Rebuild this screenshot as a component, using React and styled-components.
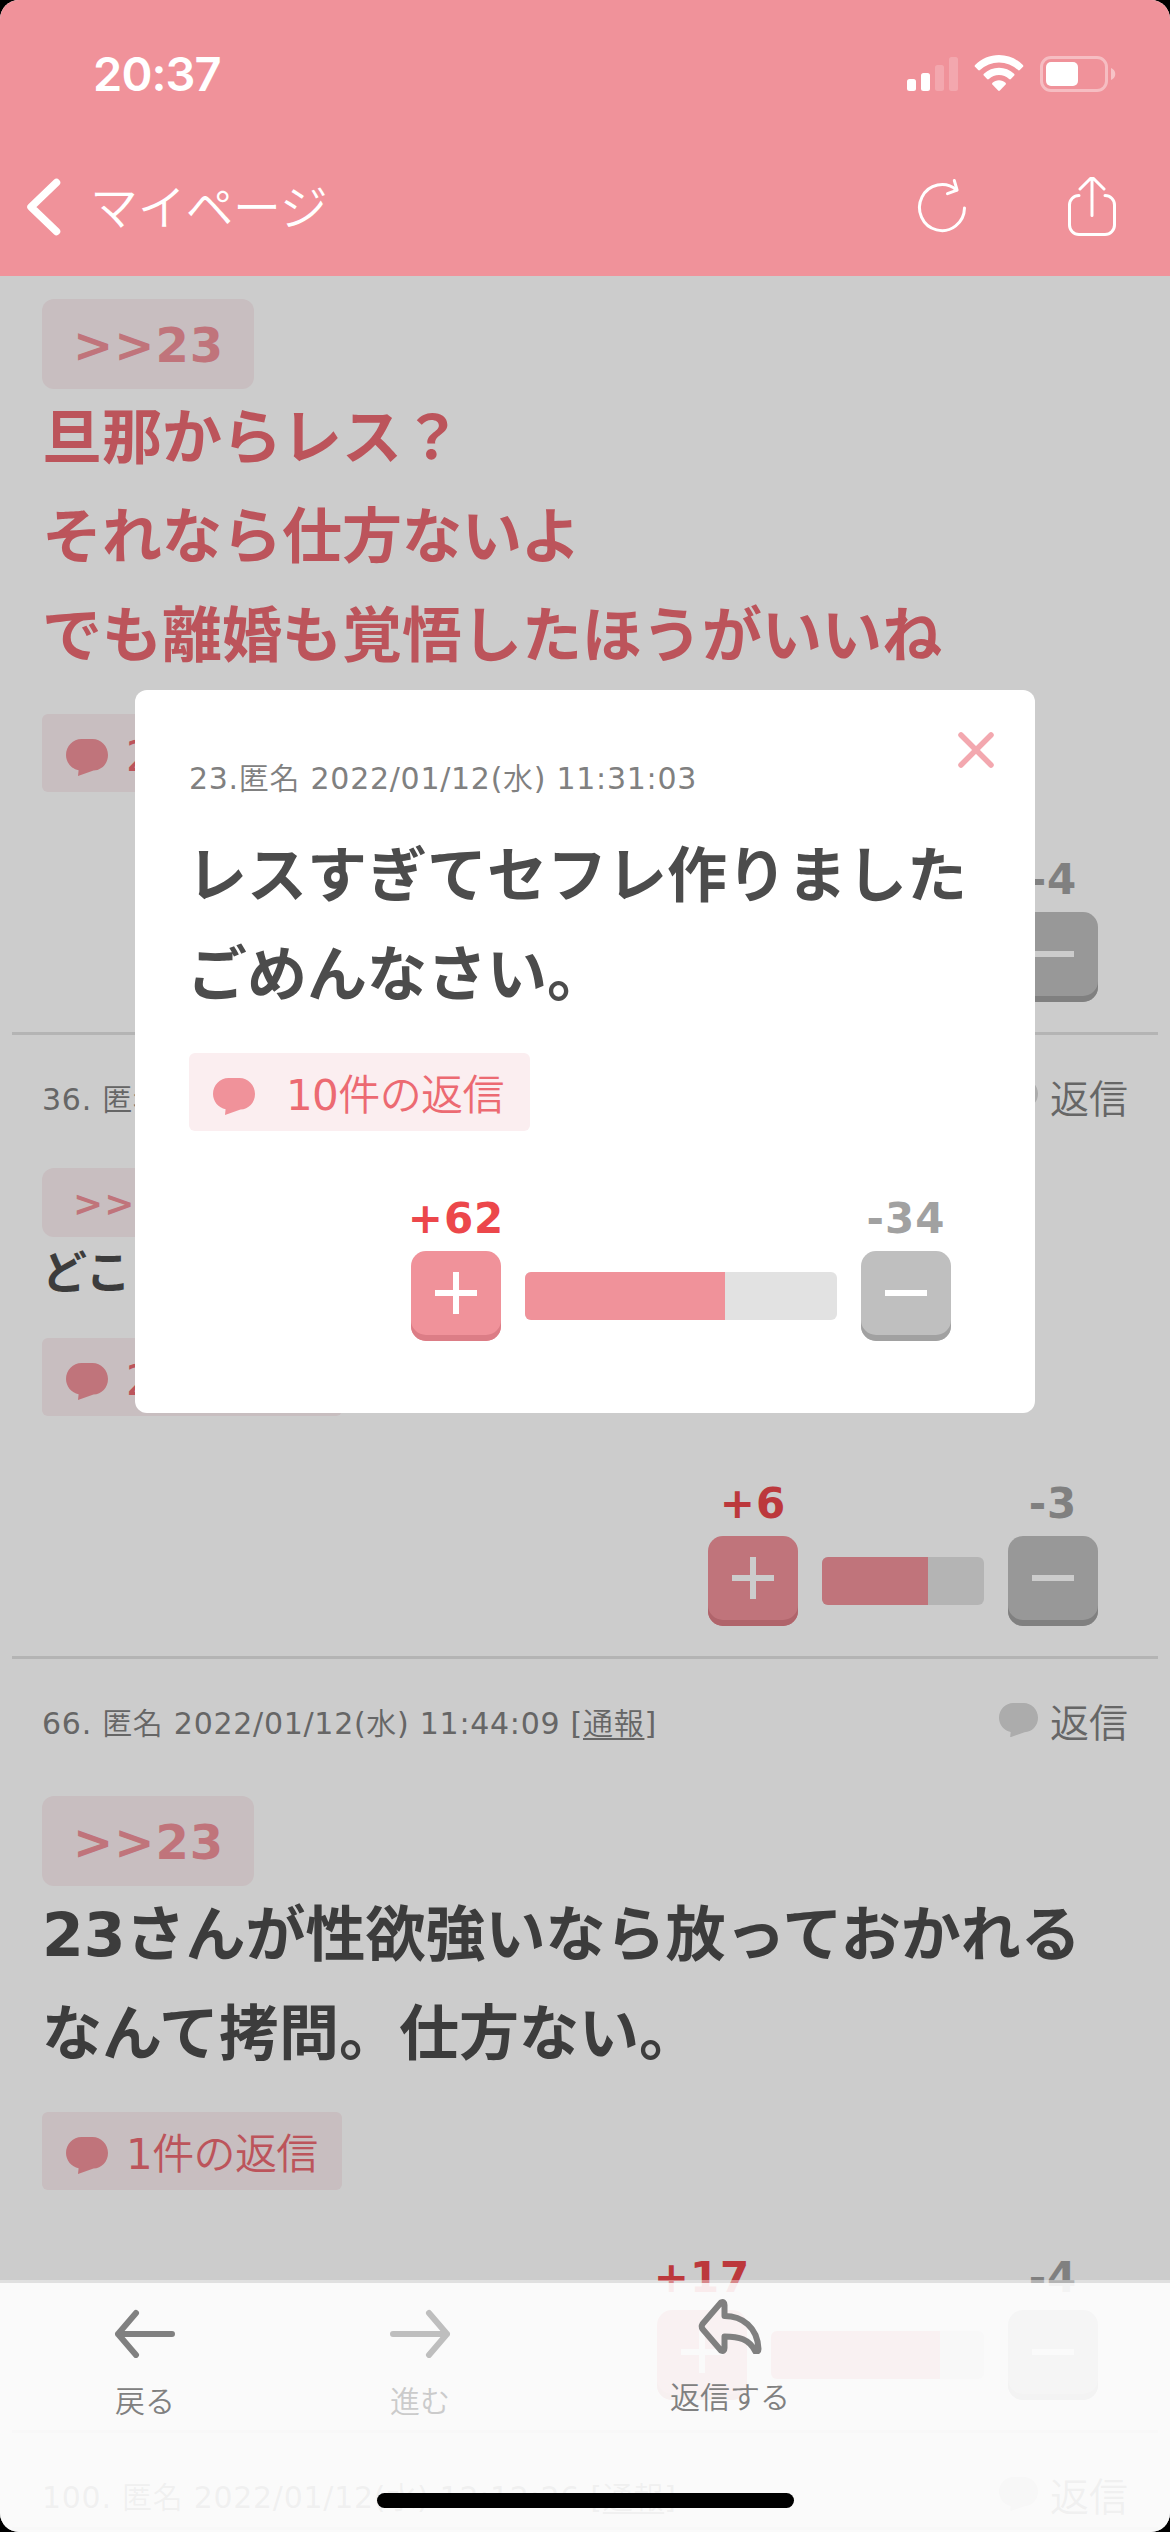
import React from "react";
import styled, { createGlobalStyle } from "styled-components";

const sans = `"DejaVu Sans", "Noto Sans CJK JP", sans-serif`;
const sansLight = `"DejaVu Sans", "Noto Sans CJK JP DemiLight", "Noto Sans CJK JP", sans-serif`;
const kana = `"Noto Sans CJK JP DemiLight", "Noto Sans CJK JP", sans-serif`;

const GlobalStyle = createGlobalStyle`
  * { box-sizing: border-box; }
  body { margin: 0; background: #000; }
  svg { display: block; flex: none; }
`;

const Screen = styled.div`
  position: relative;
  display: flex;
  flex-direction: column;
  width: 1170px;
  height: 2532px;
  overflow: hidden;
  border-radius: 19px;
  background: #fff;
  font-family: ${sans};
`;

const Header = styled.header`
  flex: none;
  height: 276px;
  background: #f0929a;
  color: #fff;
`;

const StatusBar = styled.div`
  display: flex;
  align-items: center;
  justify-content: space-between;
  height: 148px;
  padding: 0 54px 0 93px;
`;

const Clock = styled.span`
  font: 600 47px/56px Inter, sans-serif;
  letter-spacing: -0.9px;
`;

const NavBar = styled.nav`
  display: flex;
  align-items: center;
  height: 118px;
  padding: 0 51px 0 24px;
`;

const NavTitle = styled.span`
  flex: 1;
  margin-left: 26px;
  padding-bottom: 6px;
  font: 300 48px/60px ${kana};
  letter-spacing: -0.3px;
`;

const ShareWrap = styled.span`
  margin-left: 96px;
`;

const Main = styled.main`
  position: relative;
  flex: 1;
  min-height: 0;
  overflow: hidden;
`;

const Post = styled.article`
  padding: 0 30px ${(p) => (p.$last ? 0 : 30)}px;
  margin: 0 12px;
  border-bottom: 3px solid #e2e2e2;
`;

const PostHead = styled.div`
  display: flex;
  align-items: center;
  height: 60px;
  margin-top: 34px;
`;

const Meta = styled.span`
  flex: 1;
  font-family: ${sansLight};
  font-size: 30px;
  line-height: 45px;
  letter-spacing: 0.72px;
  white-space: nowrap;
  color: #808080;
`;

const Report = styled.a`
  text-decoration: underline;
  text-decoration-thickness: 2px;
  text-underline-offset: 4px;
`;

const ReplyLink = styled.span`
  display: flex;
  align-items: center;
  gap: 12px;
  font: 300 39px/58px ${kana};
  color: #808080;
`;

const ReplyLabel = styled.span`
  padding-bottom: 6px;
`;

const RefRow = styled.div`
  display: flex;
  padding-top: ${(p) => p.$top}px;
`;

const Ref = styled.a`
  height: ${(p) => (p.$small ? 69 : 90)}px;
  padding: 0 30px 0 31px;
  border-radius: 12px;
  background: #fbeef0;
  color: #f0929a;
  font-weight: 700;
  font-size: ${(p) => (p.$small ? 36 : 48)}px;
  line-height: ${(p) => (p.$small ? 71 : 92)}px;
  letter-spacing: 1px;
`;

const Body = styled.p`
  margin: 0;
  font-weight: 700;
  font-size: ${(p) => (p.$small ? 45 : 60)}px;
  line-height: ${(p) => (p.$small ? 74 : 99)}px;
  color: ${(p) => (p.$pink ? "#ec6a72" : "#4c4c4c")};
  white-space: pre;
`;

const Replies = styled.a`
  display: flex;
  align-items: center;
  width: fit-content;
  height: 78px;
  margin-top: ${(p) => p.$top || 28}px;
  padding: 0 ${(p) => (p.$wide ? 26 : 24)}px 0 24px;
  gap: ${(p) => (p.$wide ? 31 : 18)}px;
  border-radius: 6px;
  background: #fbeef0;
  color: #ec6a72;
  font-family: ${sansLight};
  font-size: 42px;
  line-height: 60px;
  letter-spacing: -0.6px;
`;

const BubbleSlot = styled.span`
  padding-top: 8px;
`;

const RepliesLabel = styled.span`
  padding-top: 8px;
`;

const Votes = styled.div`
  display: flex;
  align-items: flex-end;
  justify-content: flex-end;
  gap: 24px;
  padding: 63px 30px 0 0;
`;

const VoteColumn = styled.div`
  display: flex;
  flex-direction: column;
  align-items: center;
  width: 90px;
`;

const Count = styled.span`
  padding-top: 1px;
  margin-bottom: 8px;
  font-weight: 700;
  font-size: 42px;
  line-height: 48px;
  letter-spacing: 1px;
  white-space: nowrap;
  color: ${(p) => (p.$plus ? "#ec474b" : "#a1a1a1")};
`;

const VoteButton = styled.button`
  display: flex;
  justify-content: center;
  width: 90px;
  height: 90px;
  padding: 21px 0 0;
  border: 0;
  border-radius: 15px;
  background: ${(p) => (p.$plus ? "#f0929a" : "#bfbfbf")};
  box-shadow: inset 0 -6px 0 ${(p) => (p.$plus ? "#dc7d86" : "#a1a1a1")};
`;

const Meter = styled.div`
  width: ${(p) => p.$width}px;
  height: 48px;
  margin-bottom: 21px;
  overflow: hidden;
  border-radius: 6px;
  background: #e2e2e2;
`;

const MeterFill = styled.div`
  width: ${(p) => p.$width}px;
  height: 100%;
  background: #f0929a;
`;

const Backdrop = styled.div`
  position: absolute;
  inset: 0;
  background: rgba(0, 0, 0, 0.2);
`;

const Modal = styled.section`
  position: absolute;
  top: 414px;
  left: 135px;
  width: 900px;
  height: 723px;
  padding: 66px 54px 0;
  border-radius: 12px;
  background: #fff;
`;

const ModalMeta = styled(Meta)`
  display: block;
  margin-bottom: 26px;
`;

const ModalBody = styled(Body)`
  margin-left: -2px;
`;

const Close = styled.button`
  position: absolute;
  top: 41px;
  right: 40px;
  padding: 0;
  border: 0;
  background: none;
`;

const Toolbar = styled.footer`
  position: absolute;
  left: 0;
  right: 0;
  bottom: 0;
  height: 252px;
  border-top: 3px solid rgba(255, 255, 255, 0.4);
  background: rgba(255, 255, 255, 0.9);
  background-clip: padding-box;
`;

const Tools = styled.div`
  display: flex;
  padding-left: 55px;
`;

const Tool = styled.button`
  display: flex;
  flex-direction: column;
  align-items: center;
  width: ${(p) => p.$width}px;
  padding: ${(p) => p.$top}px 0 0;
  border: 0;
  background: none;
  gap: 19px;
  color: ${(p) => (p.$off ? "#cbcbcb" : "#808080")};
  font: 300 30px/44px ${kana};
`;

const HomeIndicator = styled.div`
  position: absolute;
  left: 377px;
  bottom: 24px;
  width: 417px;
  height: 15px;
  border-radius: 8px;
  background: #000;
`;

function StatusIcons() {
  return (
    <svg width="210" height="40" viewBox="906 54 210 40" fill="#fff">
      <rect x="907" y="79" width="9" height="12" rx="2.5" />
      <rect x="921" y="73" width="9" height="18" rx="2.5" />
      <rect x="935" y="65" width="9" height="26" rx="2.5" opacity=".2" />
      <rect x="949" y="57" width="9" height="34" rx="2.5" opacity=".2" />
      <path d="M999 55c9 0 17.500 3.600 23.900 9.900.6.6.6 1.300.1 1.900l-3.200 3.300c-.5.5-1.200.5-1.800 0a27.500 27.500 0 0 0-38 0c-.6.5-1.300.5-1.800 0l-3.200-3.300c-.5-.6-.5-1.300.1-1.900C981.500 58.600 990 55 999 55z" />
      <path d="M999 67.800c5.700 0 11 2.200 15.100 6 .6.5.6 1.300.1 1.800l-3.300 3.400c-.5.5-1.200.5-1.800 0a15 15 0 0 0-20.200 0c-.6.5-1.300.5-1.800 0l-3.300-3.400c-.5-.5-.5-1.300.1-1.800 4.100-3.800 9.400-6 15.100-6z" />
      <path d="M999 80.300c2.500 0 4.800.9 6.500 2.500.6.6.6 1.200.1 1.800l-5.700 6c-.5.5-1.300.5-1.800 0l-5.700-6c-.5-.6-.5-1.200.1-1.800 1.700-1.600 4-2.500 6.500-2.500z" />
      <rect x="1041.500" y="57.500" width="65" height="33" rx="9.500" fill="none" stroke="#fff" strokeWidth="3" opacity=".4" />
      <rect x="1046" y="62" width="32" height="24" rx="5" />
      <path d="M1111 68c2.500 1 4.300 3.300 4.300 6s-1.800 5-4.300 6z" opacity=".45" />
    </svg>
  );
}

function Bubble({ width = 42, color = "#f0929a" }) {
  return (
    <svg width={width} height={(width * 37) / 42} viewBox="0 0 42 37" fill={color}>
      <path d="M15.500 0h11C35 0 42 7.200 42 16S35.500 31.300 27.500 31.600L12 37l.6-5.800C5.500 30 0 23.500 0 16 0 7.200 7 0 15.500 0z" />
    </svg>
  );
}

function VoteGlyph({ plus }) {
  return (
    <svg width="42" height="42" viewBox="0 0 42 42" fill="#fff">
      <rect y="18" width="42" height="6" />
      {plus && <rect x="18" width="6" height="42" />}
    </svg>
  );
}

function VoteRow({ plus, minus, meter, fill }) {
  return (
    <Votes>
      <VoteColumn>
        <Count $plus>+{plus}</Count>
        <VoteButton $plus>
          <VoteGlyph plus />
        </VoteButton>
      </VoteColumn>
      <Meter $width={meter}>
        <MeterFill $width={fill} />
      </Meter>
      <VoteColumn>
        <Count>-{minus}</Count>
        <VoteButton>
          <VoteGlyph />
        </VoteButton>
      </VoteColumn>
    </Votes>
  );
}

function HeadRow({ no, time }) {
  return (
    <PostHead>
      <Meta>
        {no}. 匿名 2022/01/12(水) {time} [<Report>通報</Report>]
      </Meta>
      <ReplyLink>
        <ReplyLabel>
          <Bubble width={39} color="#d7d7d7" />
        </ReplyLabel>
        <ReplyLabel>返信</ReplyLabel>
      </ReplyLink>
    </PostHead>
  );
}

function ReplyCount({ count, wide, top }) {
  return (
    <Replies $wide={wide} $top={top}>
      <BubbleSlot>
        <Bubble />
      </BubbleSlot>
      <RepliesLabel>{count}件の返信</RepliesLabel>
    </Replies>
  );
}

export default function App() {
  return (
    <>
      <GlobalStyle />
      <Screen>
        <Header>
          <StatusBar>
            <Clock>20:37</Clock>
            <StatusIcons />
          </StatusBar>
          <NavBar>
            <svg width="40" height="60" viewBox="24 177 40 60" fill="none" stroke="#fff" strokeWidth="7.500" strokeLinecap="round" strokeLinejoin="round">
              <path d="M56.500 182.500 31 207l25.500 24.500" />
            </svg>
            <NavTitle>マイページ</NavTitle>
            <svg width="54" height="60" viewBox="915 177 54 60" fill="none" stroke="#fff" strokeWidth="3" strokeLinecap="round" strokeLinejoin="round">
              <path d="M964.500 208a22.500 23 0 1 1-8-18" />
              <path d="M954.300 180.500l2.800 9.600-9.600 3.600" />
            </svg>
            <ShareWrap>
              <svg width="54" height="60" viewBox="1065 177 54 60" fill="none" stroke="#fff" strokeWidth="3" strokeLinecap="round" strokeLinejoin="round">
                <path d="M1079 195.500a9.500 9.500 0 0 0-9.500 9.500v20a9.500 9.500 0 0 0 9.500 9.500h26a9.500 9.500 0 0 0 9.500-9.500v-20a9.500 9.500 0 0 0-9.500-9.500M1092 215.500V178M1080 189l10-10q2-1.500 4 0l10 10" />
              </svg>
            </ShareWrap>
          </NavBar>
        </Header>

        <Main>
          <Post>
            <RefRow $top={23}>
              <Ref>&gt;&gt;23</Ref>
            </RefRow>
            <Body $pink>{"旦那からレス？\nそれなら仕方ないよ\nでも離婚も覚悟したほうがいいね"}</Body>
            <ReplyCount count="2" />
            <VoteRow plus="23" minus="4" meter={213} fill={180} />
          </Post>

          <Post>
            <HeadRow no="36" time="11:35:17" />
            <RefRow $top={39}>
              <Ref $small>&gt;&gt;23</Ref>
            </RefRow>
            <Body $small>どこ</Body>
            <ReplyCount count="2" top={27} />
            <VoteRow plus="6" minus="3" meter={162} fill={106} />
          </Post>

          <Post>
            <HeadRow no="66" time="11:44:09" />
            <RefRow $top={43}>
              <Ref>&gt;&gt;23</Ref>
            </RefRow>
            <Body>{"23さんが性欲強いなら放っておかれる\nなんて拷問。仕方ない。"}</Body>
            <ReplyCount count="1" />
            <VoteRow plus="17" minus="4" meter={213} fill={169} />
          </Post>

          <Post $last>
            <HeadRow no="100" time="12:12:26" />
          </Post>

          <Backdrop />

          <Modal>
            <Close>
              <svg width="38" height="38" viewBox="0 0 38 38" stroke="#f3a8af" strokeWidth="5.500" strokeLinecap="round">
                <path d="M4 4l30 30M34 4 4 34" />
              </svg>
            </Close>
            <ModalMeta>23.匿名 2022/01/12(水) 11:31:03</ModalMeta>
            <ModalBody>{"レスすぎてセフレ作りました\nごめんなさい。"}</ModalBody>
            <ReplyCount count="10" wide />
            <VoteRow plus="62" minus="34" meter={312} fill={200} />
          </Modal>
        </Main>

        <Toolbar>
          <Tools>
            <Tool $width={180} $top={25}>
              <svg width="62" height="50" viewBox="0 0 62 50" fill="none" stroke="#808080" strokeWidth="6" strokeLinecap="round" strokeLinejoin="round">
                <path d="M58 26H4M22 5 4 26l18 21" />
              </svg>
              戻る
            </Tool>
            <Tool $width={370} $top={25} $off>
              <svg width="62" height="50" viewBox="0 0 62 50" fill="none" stroke="#bebebe" strokeWidth="6" strokeLinecap="round" strokeLinejoin="round">
                <path d="M4 26h54M40 5l18 21-18 21" />
              </svg>
              進む
            </Tool>
            <Tool $width={250} $top={15}>
              <svg width="66" height="56" viewBox="0 0 66 56" fill="none" stroke="#808080" strokeWidth="6" strokeLinecap="round" strokeLinejoin="round">
                <path d="M24 4.500Q27.500 3 27.500 7v11C45 18 60.500 29 61.500 51q0 3-3 2.500C52 41 42 38.500 27.500 38.500V50q0 4-3.500 2.500L5.500 31q-1.500-2.500 0-5z" />
              </svg>
              返信する
            </Tool>
          </Tools>
        </Toolbar>
        <HomeIndicator />
      </Screen>
    </>
  );
}
